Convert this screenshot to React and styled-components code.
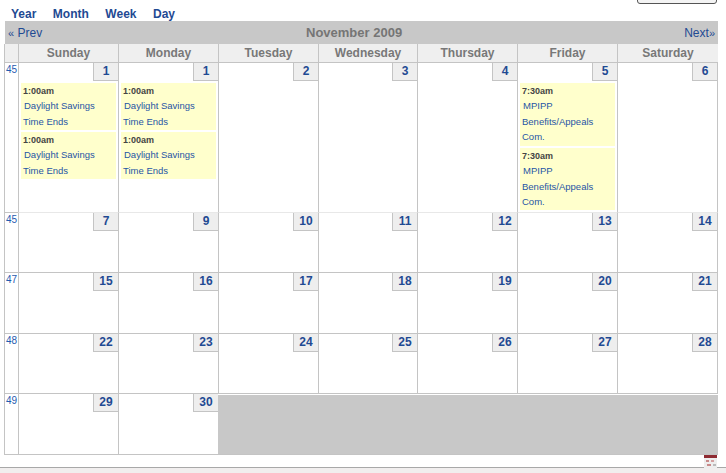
import React from "react";
import styled, { createGlobalStyle } from "styled-components";

const Global = createGlobalStyle`
  html, body { margin: 0; padding: 0; background: #fff; overflow: hidden; }
  body { font-family: "Liberation Sans", Arial, sans-serif; }
`;
const Page = styled.div`
  width: 726px; height: 473px; display: flex; flex-direction: column; position: relative;
`;
const TopButton = styled.div`
  position: absolute; left: 637px; top: -6px; width: 78px; height: 8px;
  border: 1px solid #555; border-radius: 3px; background: #f4f4f4;
`;
const Nav = styled.nav`
  height: 21px; display: flex; gap: 16.5px; padding-left: 11px; align-items: center;
  box-sizing: border-box; padding-top: 7px;
`;
const NavLink = styled.a`
  font-size: 12px; font-weight: bold; color: #1f4a93;
`;
const Calendar = styled.div`
  margin-left: 5px; width: 713px; display: flex; flex-direction: column;
`;
const TitleBar = styled.div`
  height: 23px; background: #c8c8c8; display: flex; align-items: center; justify-content: space-between;
  padding: 0 3px 0 3px; font-size: 12px; color: #1f4a93; position: relative;
`;
const Title = styled.span`
  position: absolute; left: 301px; top: 4px; font-size: 13px; font-weight: bold; color: #757575;
`;
const Arrow = styled.span`font-size: 11px;`;
const Grid = styled.div`
  display: grid;
  grid-template-columns: 13px repeat(3, 100px) 99px 100px 100px 101px;
  grid-template-rows: 19px 150px 60px 61px 60px 61px;
  border-left: 1px solid #c4c4c4;
  margin-left: -1px;
  width: 714px;
  box-sizing: border-box;
`;
const Corner = styled.div`
  background: #efefef; border-bottom: 1px solid #c4c4c4;
`;
const DayHead = styled.div`
  background: #efefef; border-left: 1px solid #c4c4c4; border-bottom: 1px solid #c4c4c4;
  font-size: 12px; font-weight: bold; color: #787878; text-align: center; line-height: 18px;
  box-sizing: border-box;
`;
const WeekNo = styled.div`
  font-size: 10px; color: #1f5bb0; padding: 1px 0 0 1px; border-bottom: 1px solid #c4c4c4; box-sizing: border-box;
  line-height: 11px;
`;
const Cell = styled.div`
  border-left: 1px solid #c4c4c4; border-bottom: 1px solid ${p => p.$soft ? "#e8e8e8" : "#c4c4c4"};
  border-right: ${p => p.$last ? "1px solid #c4c4c4" : "none"};
  box-sizing: border-box; display: flex; flex-direction: column; min-width: 0;
`;
const DateNo = styled.div`
  align-self: flex-end; width: 25px; height: 18px; background: #eeeeee;
  border-left: 1px solid #c4c4c4; border-bottom: 1px solid #c4c4c4; box-sizing: border-box;
  font-size: 12px; font-weight: bold; color: #1f4a93; text-align: center; line-height: 17px;
`;
const Blank = styled.div`
  grid-column: span 5; background: #c8c8c8; border-bottom: 1px solid #c4c4c4; margin-top: 1px;
`;
const Events = styled.div`
  display: flex; flex-direction: column; gap: 2px; padding: 2px 2px 0 2px;
`;
const Event = styled.div`
  background: #ffffcc; font-size: 9.5px; line-height: 15.5px; padding-left: 2px; height: ${p => p.$h}px; box-sizing: border-box;
`;
const Time = styled.div`font-weight: bold; color: #444; font-size: 9px; line-height: 14.5px; padding-top: .5px;`;
const EvLine = styled.div`color: #1f55a5; padding-left: ${p => p.$indent ? 1 : 0}px; white-space: nowrap;`;
const Footer = styled.div`
  position: absolute; left: 0; right: 0; top: 467px; height: 6px; background: #f1eeee; border-top: 1px solid #a8a8a8; box-sizing: border-box;
`;
const Mini = styled.svg`
  position: absolute; left: 704px; top: 455px;
`;

const daylight = (
  <Events>
    {[0, 1].map(i => (
      <Event key={i} $h={47}>
        <Time>1:00am</Time>
        <EvLine $indent>Daylight Savings</EvLine>
        <EvLine>Time Ends</EvLine>
      </Event>
    ))}
  </Events>
);
const mpipp = (
  <Events>
    {[63, 62].map(h => (
      <Event key={h} $h={h}>
        <Time>7:30am</Time>
        <EvLine $indent>MPIPP</EvLine>
        <EvLine>Benefits/Appeals</EvLine>
        <EvLine>Com.</EvLine>
      </Event>
    ))}
  </Events>
);

const days = ["Sunday", "Monday", "Tuesday", "Wednesday", "Thursday", "Friday", "Saturday"];
const rows = [
  { w: 45, d: [1, 1, 2, 3, 4, 5, 6] },
  { w: 45, d: [7, 9, 10, 11, 12, 13, 14] },
  { w: 47, d: [15, 16, 17, 18, 19, 20, 21] },
  { w: 48, d: [22, 23, 24, 25, 26, 27, 28] },
];

export default function App() {
  return (
    <Page>
      <Global />
      <TopButton />
      <Nav>
        <NavLink>Year</NavLink>
        <NavLink>Month</NavLink>
        <NavLink>Week</NavLink>
        <NavLink>Day</NavLink>
      </Nav>
      <Calendar>
        <TitleBar>
          <span><Arrow>«</Arrow> Prev</span>
          <Title>November 2009</Title>
          <span>Next<Arrow>»</Arrow></span>
        </TitleBar>
        <Grid>
          <Corner />
          {days.map(d => <DayHead key={d}>{d}</DayHead>)}
          {rows.map((r, ri) => (
            <React.Fragment key={ri}>
              <WeekNo>{r.w}</WeekNo>
              {r.d.map((n, i) => (
                <Cell key={i} $soft={ri === 0} $last={i === 6}>
                  <DateNo>{n}</DateNo>
                  {ri === 0 && i < 2 && daylight}
                  {ri === 0 && i === 5 && mpipp}
                </Cell>
              ))}
            </React.Fragment>
          ))}
          <WeekNo>49</WeekNo>
          <Cell><DateNo>29</DateNo></Cell>
          <Cell><DateNo>30</DateNo></Cell>
          <Blank />
        </Grid>
      </Calendar>
      <Footer />
      <Mini width="13" height="13" viewBox="0 0 13 13">
        <rect width="13" height="13" fill="#eee" />
        <rect width="13" height="3" fill="#8e2b33" />
        <rect x="2" y="5" width="3" height="2" fill="#c98a8a" />
        <rect x="7" y="5" width="3" height="2" fill="#d4a0a0" />
        <rect x="3" y="9" width="4" height="2" fill="#c98a8a" />
        <rect x="9" y="9" width="3" height="2" fill="#bbb" />
      </Mini>
    </Page>
  );
}
